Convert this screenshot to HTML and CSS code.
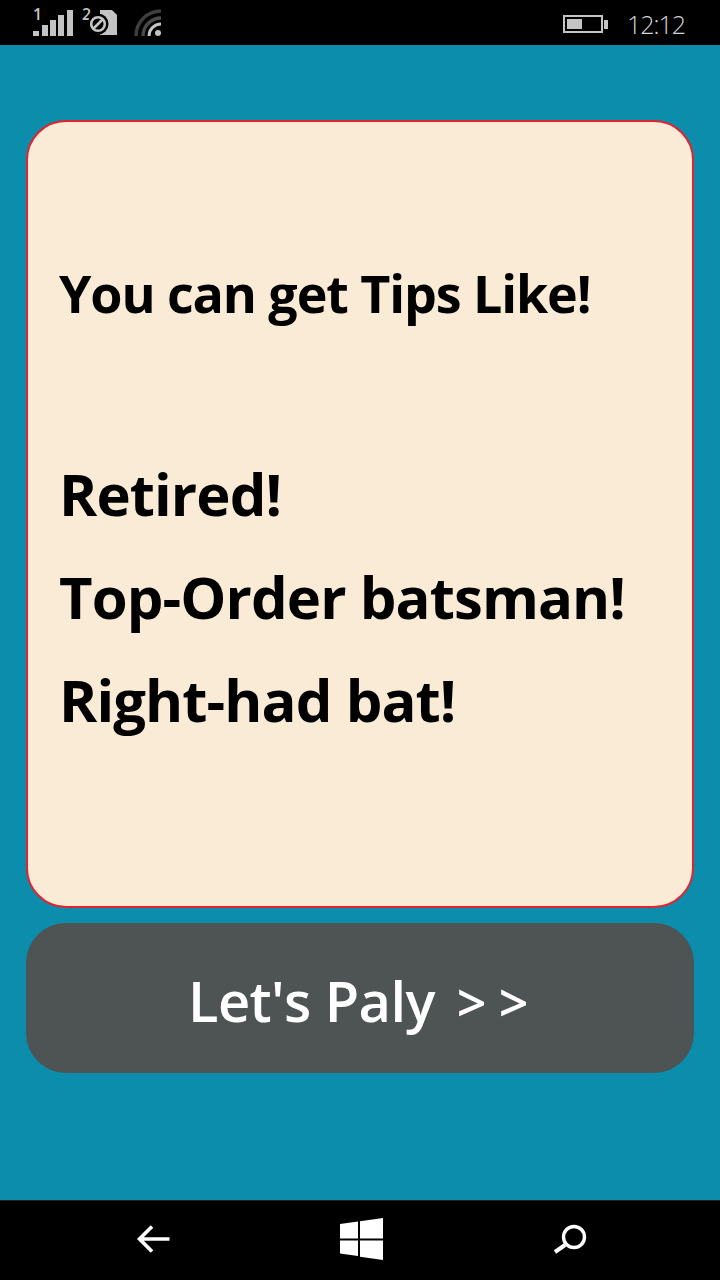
FILE: index.html
```html
<!DOCTYPE html>
<html lang="en">
<head>
<meta charset="utf-8">
<title>Tips</title>
<link rel="stylesheet" href="styles.css">
</head>
<body>
<div class="phone">
  <header class="status">
    <div class="status-left">
      <svg class="sig" width="74" height="40" viewBox="0 0 74 40">
        <text x="33" y="20" class="sim">1</text>
        <rect x="33" y="31" width="6" height="5" fill="#c4c4c4"/>
        <rect x="42" y="25" width="6" height="11" fill="#c4c4c4"/>
        <rect x="50" y="20" width="6" height="16" fill="#c4c4c4"/>
        <rect x="58" y="15" width="6" height="21" fill="#c4c4c4"/>
        <rect x="67" y="10" width="6" height="26" fill="#c4c4c4"/>
      </svg>
      <svg class="simcard" width="37" height="40" viewBox="82 0 37 40">
        <text x="82" y="20" class="sim">2</text>
        <path d="M100 10h12l5 5v20h-17z" fill="#c4c4c4"/>
        <circle cx="98" cy="24" r="10.500" fill="#000"/>
        <circle cx="98" cy="24" r="6.800" fill="none" stroke="#c4c4c4" stroke-width="2.600"/>
        <path d="M93 29l10-10" stroke="#c4c4c4" stroke-width="2.600"/>
      </svg>
      <svg class="wifi" width="28" height="28" viewBox="134 9 28 28">
        <path d="M136 36a25 25 0 0 1 25-25" fill="none" stroke="#3e3e3e" stroke-width="3.400"/>
        <path d="M143 36a18 18 0 0 1 18-18" fill="none" stroke="#4a4a4a" stroke-width="3.400"/>
        <path d="M149 36a12 12 0 0 1 12-12" fill="none" stroke="#c4c4c4" stroke-width="3"/>
        <circle cx="158" cy="33" r="3" fill="#c4c4c4"/>
      </svg>
    </div>
    <div class="status-right">
      <span class="battery"><span class="battery-fill"></span></span>
      <span class="battery-tip"></span>
      <span class="clock">12:12</span>
    </div>
  </header>

  <main class="content">
    <section class="card">
      <p class="tip-title">You can get Tips Like!</p>
      <ul class="tips">
        <li>Retired!</li>
        <li>Top-Order batsman!</li>
        <li>Right-had bat!</li>
      </ul>
    </section>
    <button class="play">Let's Paly <span class="chev">&gt; &gt;</span></button>
  </main>

  <nav class="navbar">
    <svg width="34" height="28" viewBox="0 0 34 28">
      <path d="M16 1.500L3.500 14l12.500 12.500M3.500 14h30" fill="none" stroke="#fff" stroke-width="3.600"/>
    </svg>
    <svg width="44" height="42" viewBox="0 0 44 42">
      <path d="M0 6l18-2.500v17H0zM20 3.200L43 0v20.500H20zM0 22.500h18V38L0 35.500zM20 22.500h23V42l-23-3.200z" fill="#fff"/>
    </svg>
    <svg width="34" height="30" viewBox="0 0 34 30">
      <circle cx="21" cy="13" r="10.500" fill="none" stroke="#fff" stroke-width="3.400"/>
      <path d="M12 21L2 28" stroke="#fff" stroke-width="4"/>
    </svg>
  </nav>
</div>
</body>
</html>
```
FILE: styles.css
```css
* { box-sizing: border-box; }
html, body { margin: 0; padding: 0; }
body { width: 720px; height: 1280px; overflow: hidden; background: #0b8dab; font-family: "Open Sans", "Noto Sans", sans-serif; }
.phone { width: 720px; height: 1280px; display: flex; flex-direction: column; }

.status { height: 45px; flex: none; background: #000; display: flex; justify-content: space-between; align-items: center; padding: 0 35px 0 0; }
.status-left { display: flex; align-items: flex-start; height: 45px; }
.sig { display: block; }
.simcard { display: block; margin-left: 8px; }
.wifi { display: block; margin: 9px 0 0 15px; }
.sim { font: 600 16px "Open Sans", sans-serif; fill: #c4c4c4; }
.status-right { display: flex; align-items: center; padding-top: 3px; }
.battery { width: 40px; height: 18px; border: 2px solid #c4c4c4; padding: 2px; display: block; }
.battery-fill { display: block; width: 47%; height: 100%; background: #c4c4c4; }
.battery-tip { width: 4px; height: 9px; background: #c4c4c4; margin-left: 1px; }
.clock { font: 300 25px "Open Sans", sans-serif; color: #d4d4d4; margin-left: 19px; letter-spacing: -1px; }

.content { flex: 1; padding: 75px 26px 0; display: flex; flex-direction: column; gap: 15px; }
.card { height: 788px; background: #faebd7; border: 2px solid #e5232f; border-radius: 40px; padding: 139px 0 0 31px; color: #000; }
.tip-title { margin: 0; font-size: 52px; font-weight: 700; line-height: 64px; letter-spacing: -1.1px; }
.tips { list-style: none; margin: 137px 0 0 0; padding: 0; }
.tips li { font-size: 58px; font-weight: 700; line-height: 64px; margin-bottom: 39px; letter-spacing: -0.9px; }

.play { height: 150px; border: 0; border-radius: 40px; background: #4e5354; color: #fff; font: 600 56px "Open Sans", sans-serif; letter-spacing: -0.6px; padding: 3px 4px 0 0; }
.chev { font-weight: 600; font-size: 52px; margin-left: 8px; }

.navbar { height: 80px; flex: none; background: #000; border-top: 1px solid #222; display: flex; align-items: center; padding: 0 133px 3px 136px; justify-content: space-between; }
```
